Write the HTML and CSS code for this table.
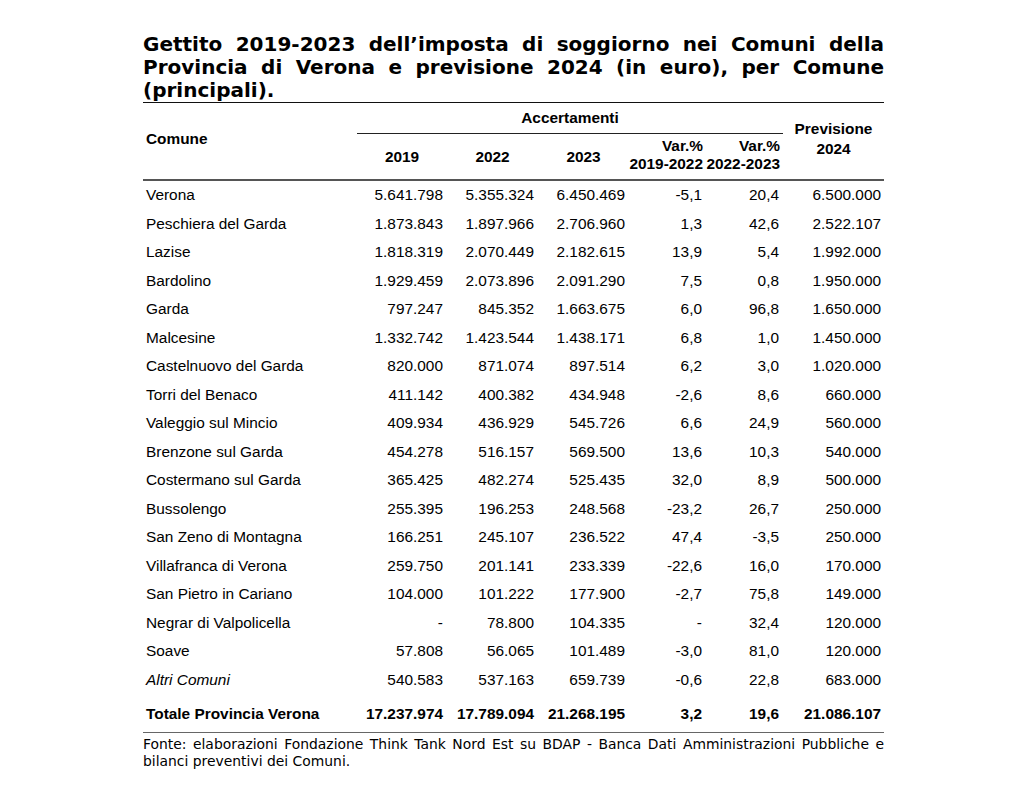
FILE: index.html
```html
<!DOCTYPE html>
<html lang="it">
<head>
<meta charset="utf-8">
<title>Gettito imposta di soggiorno - Provincia di Verona</title>
<link rel="stylesheet" href="styles.css">
</head>
<body>
<main class="page">
  <h1 class="title">Gettito 2019-2023 dell’imposta di soggiorno nei Comuni della Provincia di Verona e previsione 2024 (in euro), per Comune (principali).</h1>
  <table class="data">
    <colgroup>
      <col class="c-name"><col class="c-y"><col class="c-y2"><col class="c-y2"><col class="c-var"><col class="c-var"><col class="c-prev">
    </colgroup>
    <thead>
      <tr class="h1">
        <th rowspan="2" class="th-name">Comune</th>
        <th colspan="5" class="th-group"><span class="group-label">Accertamenti</span></th>
        <th rowspan="2" class="th-prev">Previsione<br>2024</th>
      </tr>
      <tr class="h2">
        <th class="th-year">2019</th>
        <th class="th-year">2022</th>
        <th class="th-year">2023</th>
        <th class="th-var">Var.%<br>2019-2022</th>
        <th class="th-var">Var.%<br>2022-2023</th>
      </tr>
    </thead>
    <tbody>
      <tr><td>Verona</td><td>5.641.798</td><td>5.355.324</td><td>6.450.469</td><td>-5,1</td><td>20,4</td><td>6.500.000</td></tr>
      <tr><td>Peschiera del Garda</td><td>1.873.843</td><td>1.897.966</td><td>2.706.960</td><td>1,3</td><td>42,6</td><td>2.522.107</td></tr>
      <tr><td>Lazise</td><td>1.818.319</td><td>2.070.449</td><td>2.182.615</td><td>13,9</td><td>5,4</td><td>1.992.000</td></tr>
      <tr><td>Bardolino</td><td>1.929.459</td><td>2.073.896</td><td>2.091.290</td><td>7,5</td><td>0,8</td><td>1.950.000</td></tr>
      <tr><td>Garda</td><td>797.247</td><td>845.352</td><td>1.663.675</td><td>6,0</td><td>96,8</td><td>1.650.000</td></tr>
      <tr><td>Malcesine</td><td>1.332.742</td><td>1.423.544</td><td>1.438.171</td><td>6,8</td><td>1,0</td><td>1.450.000</td></tr>
      <tr><td>Castelnuovo del Garda</td><td>820.000</td><td>871.074</td><td>897.514</td><td>6,2</td><td>3,0</td><td>1.020.000</td></tr>
      <tr><td>Torri del Benaco</td><td>411.142</td><td>400.382</td><td>434.948</td><td>-2,6</td><td>8,6</td><td>660.000</td></tr>
      <tr><td>Valeggio sul Mincio</td><td>409.934</td><td>436.929</td><td>545.726</td><td>6,6</td><td>24,9</td><td>560.000</td></tr>
      <tr><td>Brenzone sul Garda</td><td>454.278</td><td>516.157</td><td>569.500</td><td>13,6</td><td>10,3</td><td>540.000</td></tr>
      <tr><td>Costermano sul Garda</td><td>365.425</td><td>482.274</td><td>525.435</td><td>32,0</td><td>8,9</td><td>500.000</td></tr>
      <tr><td>Bussolengo</td><td>255.395</td><td>196.253</td><td>248.568</td><td>-23,2</td><td>26,7</td><td>250.000</td></tr>
      <tr><td>San Zeno di Montagna</td><td>166.251</td><td>245.107</td><td>236.522</td><td>47,4</td><td>-3,5</td><td>250.000</td></tr>
      <tr><td>Villafranca di Verona</td><td>259.750</td><td>201.141</td><td>233.339</td><td>-22,6</td><td>16,0</td><td>170.000</td></tr>
      <tr><td>San Pietro in Cariano</td><td>104.000</td><td>101.222</td><td>177.900</td><td>-2,7</td><td>75,8</td><td>149.000</td></tr>
      <tr><td>Negrar di Valpolicella</td><td>-</td><td>78.800</td><td>104.335</td><td>-</td><td>32,4</td><td>120.000</td></tr>
      <tr><td>Soave</td><td>57.808</td><td>56.065</td><td>101.489</td><td>-3,0</td><td>81,0</td><td>120.000</td></tr>
      <tr class="other"><td>Altri Comuni</td><td>540.583</td><td>537.163</td><td>659.739</td><td>-0,6</td><td>22,8</td><td>683.000</td></tr>
      <tr class="total"><td>Totale Provincia Verona</td><td>17.237.974</td><td>17.789.094</td><td>21.268.195</td><td>3,2</td><td>19,6</td><td>21.086.107</td></tr>
    </tbody>
  </table>
  <p class="source">Fonte: elaborazioni Fondazione Think Tank Nord Est su BDAP - Banca Dati Amministrazioni Pubbliche e bilanci preventivi dei Comuni.</p>
</main>
</body>
</html>
```
FILE: styles.css
```css
html, body {
  margin: 0;
  padding: 0;
  background: #ffffff;
  color: #000000;
}

.page {
  width: 741px;
  margin: 0 0 0 143px;
  padding-top: 33px;
}

.title {
  margin: 0;
  font-family: "DejaVu Sans", Verdana, sans-serif;
  font-weight: bold;
  font-size: 20px;
  line-height: 23px;
  text-align: justify;
  border-bottom: 1px solid #111;
  padding-bottom: 0;
}

.data {
  width: 741px;
  border-collapse: collapse;
  table-layout: fixed;
  font-family: "Liberation Sans", Arial, sans-serif;
  font-size: 15.4px;
}

.c-name { width: 214px; }
.c-y { width: 90px; }
.c-y2 { width: 91px; }
.c-var { width: 77px; }
.c-prev { width: 101px; }

.data th {
  font-weight: bold;
  padding: 0;
  vertical-align: middle;
}

.h1 th { height: 30px; }
.h2 th { height: 45px; }

.data thead tr.h2 th { border-bottom: 2px solid #555; }
.th-name, .th-prev { border-bottom: 2px solid #555; }

.data .th-name {
  text-align: left;
  padding: 0 0 4px 3px;
}

.th-group {
  text-align: center;
  border-bottom: 1px solid #222;
}

.data .th-prev {
  text-align: center;
  line-height: 20px;
  padding-bottom: 4px;
}

.th-year {
  text-align: center;
  padding-left: 4px;
}

.data .th-var {
  text-align: right;
  white-space: nowrap;
  line-height: 18px;
  height: 41px;
  padding: 0 3px 4px 0;
}

.data td {
  height: 28.5px;
  padding: 0 4px 0 0;
  text-align: right;
  white-space: nowrap;
  vertical-align: middle;
}

.data td:first-child {
  text-align: left;
  padding-left: 3px;
}

.data td:last-child {
  padding-right: 3px;
}

.other td:first-child { font-style: italic; }

.total td {
  font-weight: bold;
  height: 36px;
  padding-top: 2px;
  border-bottom: 1px solid #666;
}

.source {
  margin: 0;
  padding-top: 3px;
  font-family: "DejaVu Sans", Verdana, Tahoma, sans-serif;
  font-size: 13.9px;
  line-height: 17px;
  text-align: justify;
}
```
